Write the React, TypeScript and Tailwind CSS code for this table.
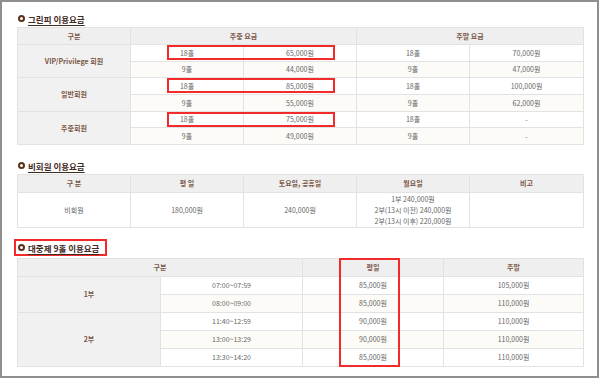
import React from "react";

const FONT = { fontFamily: "'Noto Sans CJK KR', 'Noto Sans', sans-serif" };

function Title({ text, boxed }: { text: string; boxed?: boolean }) {
  return (
    <div className="flex">
      <div
        className={`flex items-center h-[17px] pl-[2px] pr-[6px] -ml-[3px] border-2 ${
          boxed ? "border-[#f22a2a]" : "border-transparent"
        }`}
      >
        <span className="w-[7px] h-[7px] rounded-full border-2 border-[#5a3219] mr-[3px]" />
        <span className="text-[8.5px] leading-[12px] font-bold text-[#3f2a1f] underline underline-offset-[2px] decoration-[#3f2a1f]">
          {text}
        </span>
      </div>
    </div>
  );
}

const th = "border border-[#e2e2e2] bg-[#efefef] text-[#7a5646] font-bold text-center align-middle p-0";
const td = "border border-[#e2e2e2] text-[#666666] text-center align-middle p-0";
const lab = "border border-[#e2e2e2] bg-[#f1f1f1] text-[#7a5646] font-bold text-center align-middle p-0";

export default function App() {
  const t1 = [
    { name: "VIP/Privilege 회원", r: [["18홀", "65,000원", "18홀", "70,000원"], ["9홀", "44,000원", "9홀", "47,000원"]] },
    { name: "일반회원", r: [["18홀", "85,000원", "18홀", "100,000원"], ["9홀", "55,000원", "9홀", "62,000원"]] },
    { name: "주중회원", r: [["18홀", "75,000원", "18홀", "-"], ["9홀", "49,000원", "9홀", "-"]] },
  ];
  const h1 = [17, 16, 17, 17, 16, 17];
  const t3 = [
    { name: "1부", r: [["07:00~07:59", "85,000원", "105,000원"], ["08:00~09:00", "85,000원", "110,000원"]] },
    { name: "2부", r: [["11:40~12:59", "90,000원", "110,000원"], ["13:00~13:29", "90,000원", "110,000원"], ["13:30~14:20", "85,000원", "110,000원"]] },
  ];
  let i1 = 0;
  let i3 = 0;
  return (
    <div style={FONT} className="w-[599px] h-[378px] border-2 border-[#8f8f8f] bg-white pl-[15px] pt-[8px] text-[7px] leading-[9px]">
      <Title text="그린피 이용요금" />
      <div className="relative w-[566px]">
        <table className="w-[566px] table-fixed border-collapse">
          <colgroup>
            <col className="w-[113px]" />
            <col className="w-[113px]" />
            <col className="w-[113px]" />
            <col className="w-[113px]" />
            <col className="w-[114px]" />
          </colgroup>
          <thead>
            <tr className="h-[17px]">
              <th className={th}>구분</th>
              <th className={th} colSpan={2}>주중 요금</th>
              <th className={th} colSpan={2}>주말 요금</th>
            </tr>
          </thead>
          <tbody>
            {t1.map((g) =>
              g.r.map((row, j) => {
                const h = h1[i1++];
                const bg = j === 1 ? "bg-[#fcfbf7]" : "bg-white";
                return (
                  <tr key={g.name + j} style={{ height: h }} className={bg}>
                    {j === 0 && (
                      <td rowSpan={2} className={lab}>{g.name}</td>
                    )}
                    {row.map((c, k) => (
                      <td key={k} className={td}>{c}</td>
                    ))}
                  </tr>
                );
              })
            )}
          </tbody>
        </table>
        <div className="absolute left-[150px] top-[18px] w-[168px] h-[15px] border-2 border-[#f22a2a]" />
        <div className="absolute left-[150px] top-[51px] w-[168px] h-[15px] border-2 border-[#f22a2a]" />
        <div className="absolute left-[150px] top-[85px] w-[168px] h-[15px] border-2 border-[#f22a2a]" />
      </div>

      <div className="mt-[12px]">
        <Title text="비회원 이용요금" />
      </div>
      <table className="w-[566px] table-fixed border-collapse">
        <colgroup>
          <col className="w-[113px]" />
          <col className="w-[113px]" />
          <col className="w-[113px]" />
          <col className="w-[113px]" />
          <col className="w-[114px]" />
        </colgroup>
        <thead>
          <tr className="h-[18px]">
            <th className={th}>구 분</th>
            <th className={th}>평 일</th>
            <th className={th}>토요일, 공휴일</th>
            <th className={th}>월요일</th>
            <th className={th}>비고</th>
          </tr>
        </thead>
        <tbody>
          <tr className="h-[35px] bg-white">
            <td className={td}>비회원</td>
            <td className={td}>180,000원</td>
            <td className={td}>240,000원</td>
            <td className={`${td} leading-[11px]`}>
              <div>1부 240,000원</div>
              <div>2부(13시 이전) 240,000원</div>
              <div>2부(13시 이후) 220,000원</div>
            </td>
            <td className={td}></td>
          </tr>
        </tbody>
      </table>

      <div className="mt-[11px]">
        <Title text="대중제 9홀 이용요금" boxed />
      </div>
      <div className="relative w-[566px] mt-[2px]">
        <table className="w-[566px] table-fixed border-collapse">
          <colgroup>
            <col className="w-[143px]" />
            <col className="w-[142px]" />
            <col className="w-[141px]" />
            <col className="w-[140px]" />
          </colgroup>
          <thead>
            <tr className="h-[18px]">
              <th className={th} colSpan={2}>구분</th>
              <th className={th}>평일</th>
              <th className={th}>주말</th>
            </tr>
          </thead>
          <tbody>
            {t3.map((g) =>
              g.r.map((row, j) => {
                const idx = i3++;
                const bg = idx % 2 === 1 ? "bg-[#fcfbf7]" : "bg-white";
                return (
                  <tr key={g.name + j} className={`h-[18px] ${bg}`}>
                    {j === 0 && (
                      <td rowSpan={g.r.length} className={lab}>{g.name}</td>
                    )}
                    {row.map((c, k) => (
                      <td key={k} className={td}>{c}</td>
                    ))}
                  </tr>
                );
              })
            )}
          </tbody>
        </table>
        <div className="absolute left-[322px] top-0 w-[61px] h-[109px] border-2 border-[#f22a2a]" />
      </div>
    </div>
  );
}
